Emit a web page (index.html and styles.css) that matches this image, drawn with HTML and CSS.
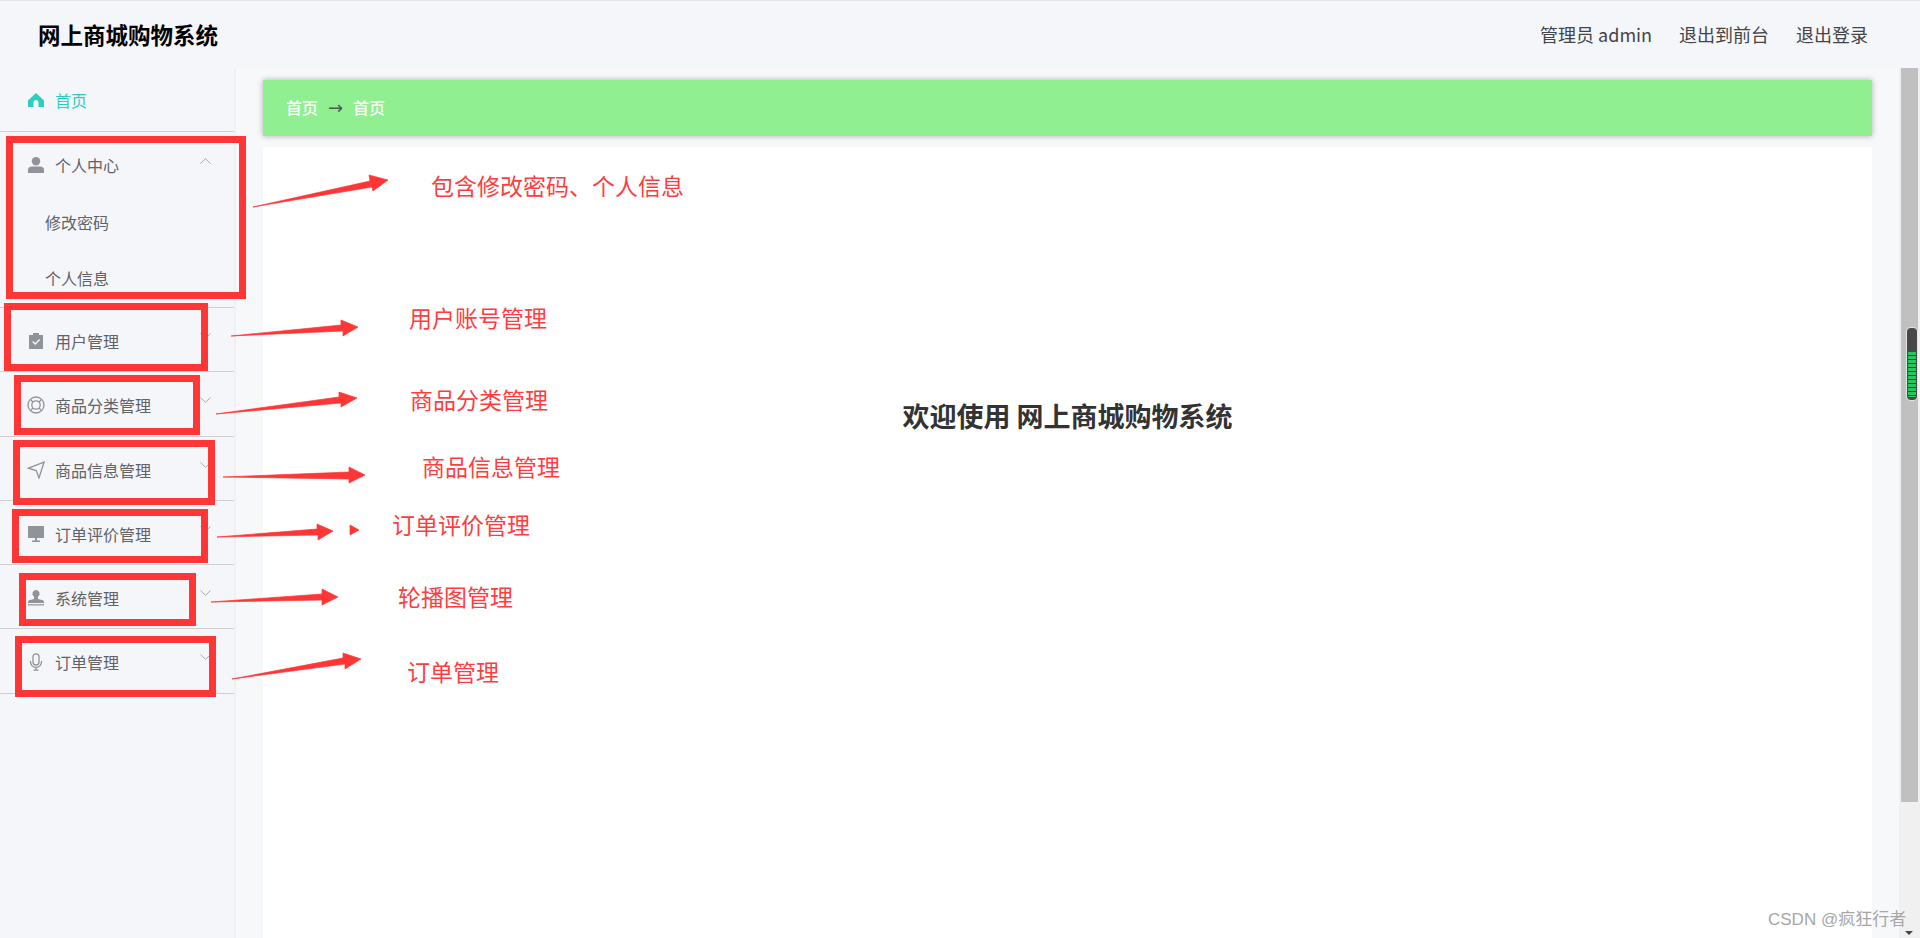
FILE: index.html
```html
<!DOCTYPE html>
<html lang="zh-CN">
<head>
<meta charset="utf-8">
<title>网上商城购物系统</title>
<link rel="stylesheet" href="styles.css">
</head>
<body>
<div class="app">
  <header class="topbar">
    <div class="brand">网上商城购物系统</div>
    <nav class="toplinks">
      <span>管理员 admin</span>
      <span>退出到前台</span>
      <span>退出登录</span>
    </nav>
  </header>
  <div class="layout">
    <aside class="sidebar">
      <div class="row row-home">
        <div class="line">
          <svg class="ico" viewBox="0 0 18 18"><path class="fill-teal" d="M9 2 L17 9.5 V16 H11.5 V11.5 A2.5 2.5 0 0 0 6.5 11.5 V16 H1 V9.5 Z"/></svg>
          <span>首页</span>
        </div>
      </div>
      <div class="group">
        <div class="row-open">
          <div class="line">
            <svg class="ico" viewBox="0 0 18 18"><circle class="fill" cx="9" cy="5.2" r="4.2"/><path class="fill" d="M1 17 V13.5 C1 11.5 3 10.5 5 10.5 H13 C15 10.5 17 11.5 17 13.5 V17 Z"/></svg>
            <span>个人中心</span>
          </div>
          <svg class="chev chev-up" viewBox="0 0 11 6"><path d="M0.5 5.5 L5.5 0.7 L10.5 5.5"/></svg>
        </div>
        <div class="sub">修改密码</div>
        <div class="sub">个人信息</div>
      </div>
      <div class="row">
        <div class="line">
          <svg class="ico" viewBox="0 0 18 18"><path class="fill" d="M2 3 H6 V1 H12 V3 H16 V17 H2 Z"/><path class="check" d="M5.6 9.6 L8.2 12 L12.6 7.4"/></svg>
          <span>用户管理</span>
        </div>
        <svg class="chev" viewBox="0 0 11 6"><path d="M0.5 0.5 L5.5 5.3 L10.5 0.5"/></svg>
      </div>
      <div class="row">
        <div class="line">
          <svg class="ico" viewBox="0 0 18 18"><circle class="line-ico" cx="9" cy="9" r="8"/><circle class="line-ico" cx="9" cy="9" r="4.2"/><path class="line-ico" d="M3.4 3.4 L6 6 M14.6 3.4 L12 6 M3.4 14.6 L6 12 M14.6 14.6 L12 12"/></svg>
          <span>商品分类管理</span>
        </div>
        <svg class="chev" viewBox="0 0 11 6"><path d="M0.5 0.5 L5.5 5.3 L10.5 0.5"/></svg>
      </div>
      <div class="row">
        <div class="line">
          <svg class="ico" viewBox="0 0 18 18"><path class="line-ico" d="M1.5 7.2 L17 1.2 L12 17 L9.2 9.6 Z"/></svg>
          <span>商品信息管理</span>
        </div>
        <svg class="chev" viewBox="0 0 11 6"><path d="M0.5 0.5 L5.5 5.3 L10.5 0.5"/></svg>
      </div>
      <div class="row">
        <div class="line">
          <svg class="ico" viewBox="0 0 18 18"><path class="fill" d="M1 1 H17 V13 H1 Z M8 13 H10 V15.5 H13 V17 H5 V15.5 H8 Z"/></svg>
          <span>订单评价管理</span>
        </div>
        <svg class="chev" viewBox="0 0 11 6"><path d="M0.5 0.5 L5.5 5.3 L10.5 0.5"/></svg>
      </div>
      <div class="row">
        <div class="line">
          <svg class="ico" viewBox="0 0 18 18"><path class="fill" d="M9 1 A3.6 3.6 0 0 1 11 7.6 V10 L15 11 C16.2 11.4 17 12 17 13 V14 H1 V13 C1 12 1.8 11.4 3 11 L7 10 V7.6 A3.6 3.6 0 0 1 9 1 Z M1 15.2 H17 V16.5 H1 Z"/></svg>
          <span>系统管理</span>
        </div>
        <svg class="chev" viewBox="0 0 11 6"><path d="M0.5 0.5 L5.5 5.3 L10.5 0.5"/></svg>
      </div>
      <div class="row">
        <div class="line">
          <svg class="ico" viewBox="0 0 18 18"><rect class="line-ico" x="6" y="0.8" width="6" height="11.2" rx="3"/><path class="line-ico" d="M3.5 8 V9 A5.5 5.5 0 0 0 14.5 9 V8 M9 14.5 V17.2 M6.5 17.2 H11.5"/></svg>
          <span>订单管理</span>
        </div>
        <svg class="chev" viewBox="0 0 11 6"><path d="M0.5 0.5 L5.5 5.3 L10.5 0.5"/></svg>
      </div>
    </aside>
    <main class="main">
      <div class="crumb">
        <span>首页</span>
        <span class="crumb-arrow">→</span>
        <span>首页</span>
      </div>
      <section class="panel">
        <h1 class="welcome">欢迎使用 网上商城购物系统</h1>
      </section>
    </main>
    <div class="scrollcol">
      <div class="thumb"><div class="gauge"><div class="gauge-bars"></div></div></div>
      <div class="scroll-down"></div>
    </div>
  </div>

  <svg class="marks" viewBox="0 0 1920 938">
    <rect x="9.5" y="139.5" width="233" height="156"/>
    <rect x="7.5" y="306.5" width="197" height="61"/>
    <rect x="17.5" y="378.5" width="179" height="53"/>
    <rect x="16.5" y="443.5" width="195" height="58"/>
    <rect x="15.5" y="512.5" width="189" height="47"/>
    <rect x="22.5" y="576.5" width="170" height="46"/>
    <rect x="18.5" y="639.5" width="194" height="54"/>
    <polygon points="253,207 370,181 369,175 388,180 373,191 372,187"/>
    <polygon points="231,336 341,325 341,320 358,327 343,336 343,331"/>
    <polygon points="216,414 339,397 339,392 357,398 341,407 341,403"/>
    <polygon points="223,477 349,472 349,467 365,475 349,483 349,479"/>
    <polygon points="217,537 317,529 317,524 333,531 318,540 318,535"/>
    <polygon points="350,525 359,530 350,535"/>
    <polygon points="211,602 322,594 322,589 338,597 322,605 322,600"/>
    <polygon points="232,679 343,658 343,653 361,659 345,669 345,664"/>
  </svg>
  <div class="note note-1">包含修改密码、个人信息</div>
  <div class="note note-2">用户账号管理</div>
  <div class="note note-3">商品分类管理</div>
  <div class="note note-4">商品信息管理</div>
  <div class="note note-5">订单评价管理</div>
  <div class="note note-6">轮播图管理</div>
  <div class="note note-7">订单管理</div>
  <div class="watermark">CSDN @疯狂行者</div>
</div>
</body>
</html>
```

FILE: styles.css
```css
* { box-sizing: border-box; }
html, body { margin: 0; height: 100%; overflow: hidden; }
body {
  font-family: "Noto Sans CJK SC", "Noto Sans", sans-serif;
  background: #f5f6fa;
  color: #606266;
}
.app {
  position: relative;
  display: flex;
  flex-direction: column;
  height: 938px;
  width: 1920px;
  overflow: hidden;
}
.topbar {
  flex: 0 0 68px;
  display: flex;
  align-items: center;
  justify-content: space-between;
  padding: 0 52px 2px 38px;
  border-top: 1px solid #e4e6eb;
  background: #f5f6fa;
}
.brand {
  font-size: 22.5px;
  font-weight: 700;
  color: #000;
}
.toplinks {
  display: flex;
  gap: 27px;
  font-size: 18px;
  color: #444;
}
.layout { flex: 1; display: flex; min-height: 0; }
.sidebar {
  flex: 0 0 236px;
  border-right: 2px solid #eff0f3;
  font-size: 16px;
}
.row, .row-open {
  display: flex;
  align-items: flex-start;
  justify-content: space-between;
  padding: 13px 23px 0 27px;
}
.row {
  height: 64.3px;
  border-bottom: 1px solid #d0d0d2;
}
.row-home {
  height: 64px;
  padding-top: 12px;
  color: #2fcdc0;
}
.row-open { height: 62px; }
.group { border-bottom: 1px solid #d0d0d2; height: 176px; }
.sub {
  height: 56px;
  line-height: 56px;
  padding-left: 45px;
}
.line {
  display: flex;
  align-items: center;
  gap: 10px;
  height: 40px;
}
.ico { width: 18px; height: 18px; flex: none; }
.fill { fill: #909399; }
.fill-teal { fill: #2fcdc0; }
.line-ico { fill: none; stroke: #909399; stroke-width: 1.3; }
.check { fill: none; stroke: #f5f6fa; stroke-width: 1.4; }
.chev {
  width: 11px;
  height: 6px;
  margin-top: 12px;
  flex: none;
}
.chev path { fill: none; stroke: #a8abb2; stroke-width: 1; }
.chev-up { margin-top: 13px; }
.main {
  flex: 1;
  min-width: 0;
  display: flex;
  flex-direction: column;
  gap: 11px;
  padding: 12px 27px 0;
  background: #f7f8fa;
}
.crumb {
  flex: 0 0 56px;
  display: flex;
  align-items: center;
  gap: 10px;
  padding: 0 0 2px 23px;
  background: #90ef90;
  color: #fff;
  font-size: 16px;
  font-weight: 500;
  box-shadow: 0 0 6px rgba(0, 0, 0, .3);
}
.crumb-arrow {
  color: #555;
  font-family: "DejaVu Sans", sans-serif;
  font-size: 18px;
  font-weight: 400;
}
.panel {
  flex: 1;
  background: #fff;
  padding-top: 249px;
}
.welcome {
  margin: 0;
  font-size: 27px;
  line-height: 40px;
  font-weight: 700;
  text-align: center;
  color: #333;
}
.scrollcol {
  position: relative;
  flex: 0 0 21px;
  display: flex;
  flex-direction: column;
  padding: 0 2px;
  background: #f0f0f0;
}
.thumb {
  position: relative;
  width: 17px;
  height: 734px;
  background: #c0c0c0;
}
.gauge {
  position: absolute;
  left: 6px;
  top: 260px;
  width: 10px;
  height: 72px;
  padding: 24px 1px 3px;
  border-radius: 4px;
  background: #484848;
  box-shadow: 0 0 0 1px #e4e4e4;
}
.gauge-bars {
  height: 100%;
  background: repeating-linear-gradient(#22c55e 0 3px, #3a3a3a 3px 4px);
}
.scroll-down {
  margin: auto 0 3px 4px;
  width: 0;
  height: 0;
  border-left: 4.5px solid transparent;
  border-right: 4.5px solid transparent;
  border-top: 4px solid #444;
}
.marks {
  position: absolute;
  left: 0;
  top: 0;
  width: 1920px;
  height: 938px;
  pointer-events: none;
}
.marks rect { fill: none; stroke: #fe3636; stroke-width: 7; }
.marks polygon { fill: #fe3636; stroke: #fe3636; stroke-width: .7; }
.note {
  position: absolute;
  font-size: 23px;
  line-height: 32px;
  color: #fe3e3e;
  white-space: nowrap;
}
.note-1 { left: 431px; top: 169px; }
.note-2 { left: 409px; top: 301px; }
.note-3 { left: 410px; top: 383px; }
.note-4 { left: 422px; top: 450px; }
.note-5 { left: 392px; top: 508px; }
.note-6 { left: 398px; top: 580px; }
.note-7 { left: 407px; top: 655px; }
.watermark {
  position: absolute;
  left: 1768px;
  top: 908px;
  font-family: "Liberation Sans", "Noto Sans CJK SC", sans-serif;
  font-size: 17px;
  line-height: 24px;
  color: #a6a6a6;
  white-space: nowrap;
}
```
